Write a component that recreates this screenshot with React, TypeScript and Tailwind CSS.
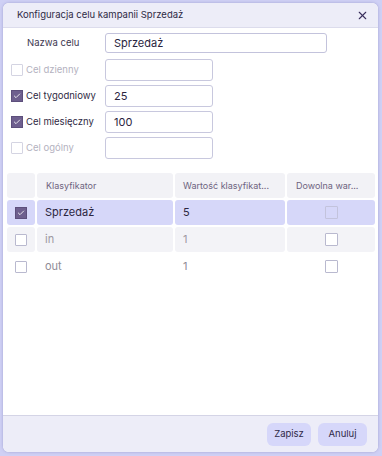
import React from "react";
import { X, Check } from "lucide-react";

const font = { fontFamily: "Inter, 'Noto Sans', sans-serif" };

const Box: React.FC<{ checked?: boolean; faint?: boolean }> = ({ checked, faint }) =>
  checked ? (
    <span className="w-[12px] h-[12px] flex items-center justify-center bg-[#6e5f8e] border border-[#5d4f7c]">
      <Check size={8} strokeWidth={2.5} className="text-white" />
    </span>
  ) : (
    <span
      className={`w-[12px] h-[12px] bg-white border ${
        faint ? "border-[#d4d4e2]" : "border-[#b9b9cf]"
      } rounded-[1px]`}
    />
  );

const goals = [
  { label: "Cel dzienny", checked: false, value: "" },
  { label: "Cel tygodniowy", checked: true, value: "25" },
  { label: "Cel miesięczny", checked: true, value: "100" },
  { label: "Cel ogólny", checked: false, value: "" },
];

const rows = [
  { name: "Sprzedaż", val: "5", checked: true, bg: "bg-[#d6d7f9]", text: "text-[#2c2640]" },
  { name: "in", val: "1", checked: false, bg: "bg-[#f3f3f7]", text: "text-[#9d98a2]" },
  { name: "out", val: "1", checked: false, bg: "bg-white", text: "text-[#8f8b96]" },
];

export default function App() {
  return (
    <div className="w-[382px] h-[456px] bg-[#cfd0f5] p-[3px] pr-[4px] pb-[4px]" style={font}>
      <div className="h-full flex flex-col rounded-[6px] overflow-hidden bg-white shadow-[0_0_3px_rgba(80,80,140,0.35)]">
        {/* header */}
        <div className="h-[25px] shrink-0 flex items-center justify-between pl-[14px] pr-[9px] bg-[#ededf8] border-b border-[#dcdcec]">
          <span className="text-[9.5px] text-[#2d2a45]">Konfiguracja celu kampanii Sprzedaż</span>
          <X size={13} strokeWidth={2} className="text-[#3a2f5c]" />
        </div>

        {/* body */}
        <div className="flex-1 flex flex-col">
          <div className="flex items-center mt-[5px] h-[20px]">
            <span className="w-[102px] pl-[24px] text-[9.5px] text-[#3c3850]">Nazwa celu</span>
            <div className="w-[222px] h-[20px] border border-[#c3c3dc] rounded-[3px] flex items-center pl-[8px] text-[11px] text-[#2a2540]">
              Sprzedaż
            </div>
          </div>

          <div className="flex flex-col gap-[4px] mt-[6px]">
            {goals.map((g) => (
              <div key={g.label} className="flex items-center h-[22px]">
                <div className="w-[102px] pl-[8px] flex items-center gap-[3px]">
                  <Box checked={g.checked} faint />
                  <span
                    className={`text-[9.5px] ${g.checked ? "text-[#2f2a44]" : "text-[#b4b2c0]"}`}
                  >
                    {g.label}
                  </span>
                </div>
                <div className="w-[108px] h-[22px] border border-[#c8c8de] rounded-[3px] flex items-center pl-[8px] text-[11px] text-[#2a2540]">
                  {g.value}
                </div>
              </div>
            ))}
          </div>

          {/* table */}
          <div className="mt-[14px] mx-[4px] mr-[3px] flex flex-col gap-[2px]">
            <div className="grid grid-cols-[28px_136px_110px_1fr] gap-[2px] h-[25px]">
              <div className="bg-[#f2f2f6] rounded-[3px]" />
              <div className="bg-[#f2f2f6] rounded-[3px] flex items-center pl-[9px] text-[9px] text-[#6e6480]">
                Klasyfikator
              </div>
              <div className="bg-[#f2f2f6] rounded-[3px] flex items-center pl-[8px] text-[9px] text-[#6e6480] whitespace-nowrap overflow-hidden">
                Wartość klasyfikat...
              </div>
              <div className="bg-[#f2f2f6] rounded-[3px] flex items-center pl-[9px] text-[9px] text-[#6e6480] whitespace-nowrap overflow-hidden">
                Dowolna war...
              </div>
            </div>
            {rows.map((r) => (
              <div key={r.name} className="grid grid-cols-[28px_136px_110px_1fr] gap-[2px] h-[25px]">
                <div className={`${r.bg} rounded-[3px] flex items-center justify-center`}>
                  <Box checked={r.checked} />
                </div>
                <div className={`${r.bg} rounded-[3px] flex items-center pl-[8px] text-[11px] ${r.text}`}>
                  {r.name}
                </div>
                <div className={`${r.bg} rounded-[3px] flex items-center pl-[8px] text-[11px] ${r.text}`}>
                  {r.val}
                </div>
                <div className={`${r.bg} rounded-[3px] flex items-center justify-center`}>
                  <span
                    className={`w-[13px] h-[13px] border rounded-[1px] ${
                      r.checked ? "border-[#c3c3dc]" : "border-[#b9b9cf] bg-white"
                    }`}
                  />
                </div>
              </div>
            ))}
          </div>
        </div>

        {/* footer */}
        <div className="h-[37px] shrink-0 bg-[#ededf8] border-t border-[#d4d4e6] flex items-center justify-end gap-[7px] pr-[11px]">
          <button className="h-[23px] w-[44px] rounded-[6px] bg-[#d6d7fa] text-[9.5px] text-[#2f2a48]">
            Zapisz
          </button>
          <button className="h-[23px] w-[49px] rounded-[6px] bg-[#d6d7fa] text-[9.5px] text-[#2f2a48]">
            Anuluj
          </button>
        </div>
      </div>
    </div>
  );
}
